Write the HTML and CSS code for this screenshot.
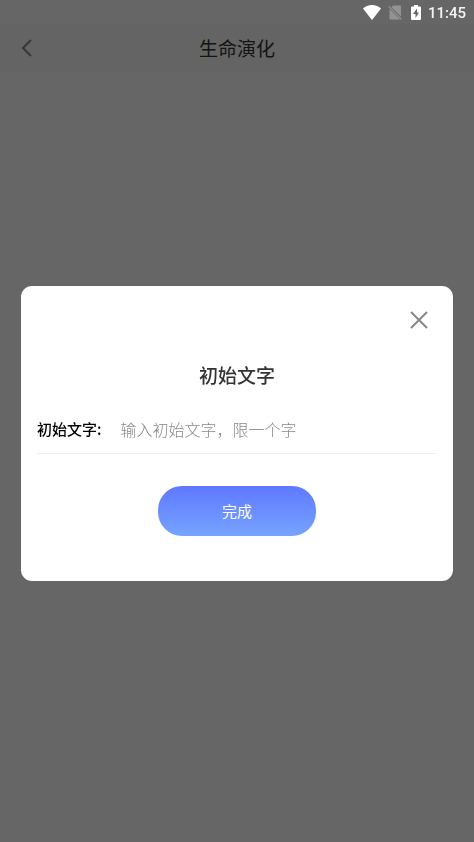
FILE: index.html
```html
<!DOCTYPE html>
<html lang="zh-CN">

<head>
    <meta charset="utf-8">
    <meta name="viewport" content="width=device-width, initial-scale=1">
    <title>生命演化</title>
    <link rel="stylesheet" href="styles.css">
</head>

<body>
    <div class="page">
        <header class="navbar">
            <button class="back" type="button" aria-label="返回">
                <svg width="12" height="18" viewBox="0 0 12 18">
                    <path d="M10 1 L2 9 L10 17" fill="none" stroke="currentColor" stroke-width="2" />
                </svg>
            </button>
            <h1 class="navbar-title">生命演化</h1>
        </header>
    </div>

    <div class="overlay">
        <div class="statusbar">
            <svg class="wifi" width="18" height="15" viewBox="0 0 18 15">
                <path d="M9 15 L0 3.6 C2.4 1.4 5.4 0 9 0 S15.600 1.4 18 3.6 Z" fill="#fff" />
            </svg>
            <svg class="sim" width="14" height="15" viewBox="0 0 14 15">
                <path d="M5.200 0.500 H12 Q13 0.500 13 1.500 V11.600 L3.400 2.300 Z" fill="#939393" />
                <path d="M1.500 4 L12 14.500 H2.500 Q1.500 14.500 1.500 13.500 Z" fill="#939393" />
                <path d="M0.500 1.200 L13.500 14.500" stroke="#939393" stroke-width="1.200" />
            </svg>
            <svg class="battery" width="10" height="15" viewBox="0 0 10 15">
                <path d="M3 0 H7 V1.500 H9 Q10 1.500 10 2.500 V14 Q10 15 9 15 H1 Q0 15 0 14 V2.500 Q0 1.500 1 1.500 H3 Z" fill="#fff" />
                <path d="M6 3.500 L2 9 H4.500 V13 L8 7.500 H6 Z" fill="#666" />
            </svg>
            <time class="clock">11:45</time>
        </div>

        <div class="overlay-body">
            <form class="dialog" role="dialog" aria-labelledby="dialog-title">
                <button class="close" type="button" aria-label="关闭">
                    <svg width="18" height="18" viewBox="0 0 18 18">
                        <path d="M1 1 L17 17 M17 1 L1 17" fill="none" stroke="currentColor" stroke-width="2" />
                    </svg>
                </button>
                <h2 class="dialog-title" id="dialog-title">初始文字</h2>
                <div class="field">
                    <label class="field-label" for="word">初始文字:</label>
                    <input class="field-input" id="word" type="text" maxlength="1" placeholder="输入初始文字，限一个字">
                </div>
                <button class="submit" type="submit">完成</button>
            </form>
        </div>
    </div>
</body>

</html>
```
FILE: styles.css
```css
* {
    box-sizing: border-box;
    margin: 0;
    padding: 0;
}

body {
    min-height: 100vh;
    background-color: #fff;
    font-family: "Noto Sans CJK SC", sans-serif;
}

button {
    border: none;
    background: none;
    font-family: inherit;
    cursor: pointer;
}

svg {
    display: block;
}

.page {
    padding-top: 24px;
}

.navbar {
    display: grid;
    grid-template-columns: 54px 1fr 54px;
    align-items: center;
    height: 47px;
    background-color: #fbfbfb;
}

.back {
    justify-self: center;
    color: #888;
}

.navbar-title {
    grid-column: 2;
    color: #333;
    font-size: 19px;
    font-weight: 400;
    line-height: 28px;
    text-align: center;
}

/* dimmed layer over the page, status bar included */
.overlay {
    position: fixed;
    inset: 0;
    display: flex;
    flex-direction: column;
    background-color: rgba(0, 0, 0, 0.6);
}

.statusbar {
    display: flex;
    justify-content: flex-end;
    align-items: center;
    height: 25px;
    padding-right: 8px;
}

.sim {
    margin-left: 7px;
}

.battery {
    margin-left: 9px;
}

.clock {
    margin-left: 7px;
    color: #f4f4f4;
    font-family: Roboto, sans-serif;
    font-size: 15px;
    font-weight: 500;
    line-height: 24px;
}

.overlay-body {
    flex: 1;
    display: flex;
    align-items: center;
    padding: 0 21px;
}

.dialog {
    flex: 1;
    display: flex;
    flex-direction: column;
    padding: 25px 16px 45px;
    border-radius: 11px;
    background-color: #fff;
}

.close {
    align-self: flex-end;
    margin-right: 9px;
    color: #888;
}

.dialog-title {
    margin-top: 32px;
    color: #333;
    font-size: 19px;
    font-weight: 500;
    line-height: 28px;
    text-align: center;
}

.field {
    display: flex;
    align-items: center;
    gap: 19px;
    margin-top: 26px;
    padding-bottom: 10px;
    border-bottom: 1px solid #eee;
}

.field-label {
    color: #000;
    font-size: 15px;
    font-weight: 500;
    line-height: 24px;
}

.field-input {
    flex: 1;
    min-width: 0;
    height: 28px;
    border: none;
    outline: none;
    color: #333;
    font-family: inherit;
    font-size: 16px;
}

.field-input::placeholder {
    color: #888;
    font-weight: 300;
}

.submit {
    align-self: center;
    width: 158px;
    height: 50px;
    margin-top: 32px;
    padding-bottom: 2px;
    border-radius: 24px;
    background-image: linear-gradient(#5f78ff, #76a4ff);
    color: #fff;
    font-size: 15px;
}
```
